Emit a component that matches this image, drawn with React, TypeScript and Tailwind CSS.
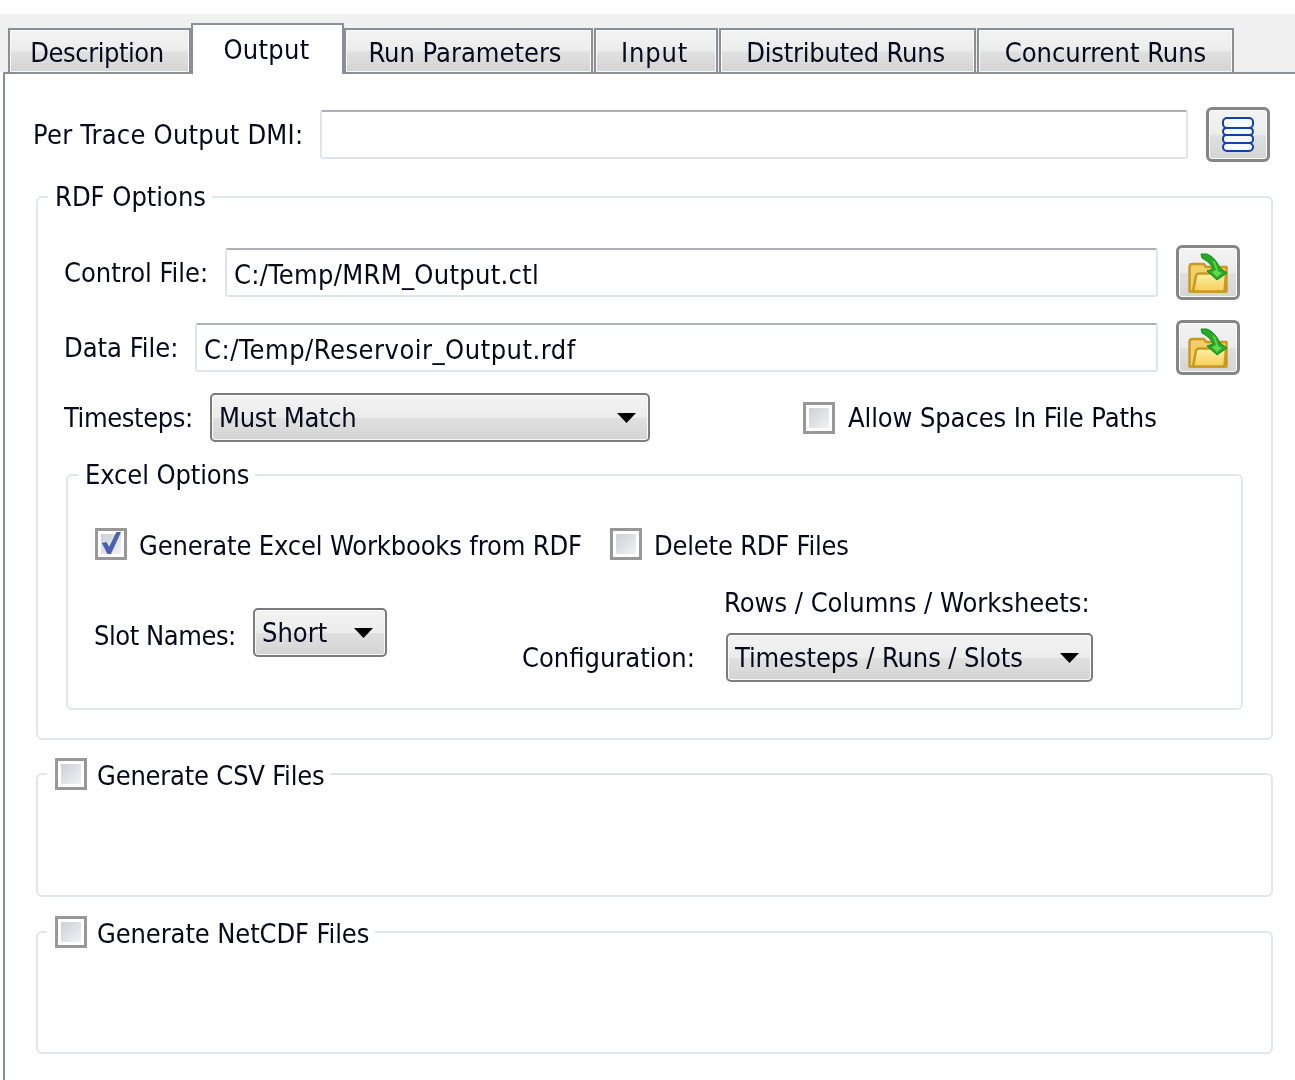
import React from 'react';

const btnBg = 'bg-[linear-gradient(to_bottom,#f3f3f3_0%,#ececec_50%,#e0e0e0_52%,#d4d4d4_100%)]';

const tabs = [
  { label: 'Description', w: 'w-[183px] pr-[5px] tracking-[-0.45px]' },
  { label: 'Output', w: 'w-[153px] pr-[2px] tracking-[0.3px]', active: true },
  { label: 'Run Parameters', w: 'w-[249px] mr-[1px] pr-[7px]' },
  { label: 'Input', w: 'w-[124px] mr-[1px] pr-[3px] tracking-[0.8px]' },
  { label: 'Distributed Runs', w: 'w-[257px] mr-[1px] pr-[4px] tracking-[-0.2px]' },
  { label: 'Concurrent Runs', w: 'w-[257px]' },
];

const FolderIcon = () => (
  <svg width="40" height="40" viewBox="0 0 40 40">
    <defs>
      <linearGradient id="folderFront" x1="0" y1="0" x2="0" y2="1">
        <stop offset="0" stopColor="#fff0a8" />
        <stop offset="1" stopColor="#f6cf58" />
      </linearGradient>
    </defs>
    <path d="M1.5 38.5V14q0-3 3-3h11l3 3h20v24.5z" fill="#f4cf68" stroke="#c89a24" strokeWidth="2.5" strokeLinejoin="round" />
    <path d="M5 38.5l3-16q1-2 3-2h27l-1.5 18z" fill="url(#folderFront)" stroke="#c89a24" strokeWidth="2.5" strokeLinejoin="round" />
    <path d="M13 1H19Q27 4 32 15L39 20L29 27L19 18L25 16Q23 10 14 5Z" fill="#2aa828" stroke="#12901a" strokeWidth="1" strokeLinejoin="round" />
    <path d="M27 9Q29 13 30 18L34 20L29 24L24 19L28 17Q27 12 24 7Z" fill="#62d84c" />
  </svg>
);

const DbIcon = () => (
  <svg width="32" height="35" viewBox="0 0 32 35" fill="#f4fbfc" stroke="#1440a8" strokeWidth="2">
    <rect x="1" y="1" width="30" height="10" rx="4" />
    <rect x="1" y="11" width="30" height="7" rx="3.5" />
    <rect x="1" y="18" width="30" height="8" rx="3.5" />
    <rect x="1" y="26" width="30" height="8" rx="4" />
  </svg>
);

const IconButton = ({ children }: { children: React.ReactNode }) => (
  <div className={`w-[64px] h-[55px] shrink-0 flex items-center justify-center border-[3px] border-[#868686] rounded-[6px] shadow-[inset_0_0_0_1px_#fafafa] ${btnBg}`}>
    {children}
  </div>
);

const TextInput = ({ value, className }: { value?: string; className: string }) => (
  <div className={`h-[49px] flex items-center pl-[7px] pt-[4px] border-2 border-[#e0e4ec] border-t-[#adb0b8] rounded-[3px] bg-white ${className}`}>
    {value}
  </div>
);

const Combo = ({ value, className, text }: { value: string; className: string; text?: string }) => (
  <div className={`h-[49px] flex items-center justify-between pl-[7px] pr-[12px] border-2 border-[#7c7c7c] rounded-[5px] shadow-[inset_0_0_0_1px_#fafafa] ${btnBg} ${className}`}>
    <span className={text}>{value}</span>
    <svg width="19" height="10" viewBox="0 0 19 10">
      <path d="M0 0h19L9.5 10z" fill="#000" />
    </svg>
  </div>
);

const Check = ({ checked }: { checked?: boolean }) => (
  <div className="w-[32px] h-[32px] shrink-0 border-[3px] border-[#989898] bg-white p-[3px]">
    <div className="w-full h-full flex items-center justify-center bg-[linear-gradient(135deg,#cdd0d6_0%,#f2f2f5_100%)]">
      {checked && (
        <svg width="22" height="24" viewBox="0 0 22 24" className="-mt-[3px]">
          <path d="M1 12l5-1 3 5L17 0h5L11 24H7z" fill="#4a62ae" />
        </svg>
      )}
    </div>
  </div>
);

const fieldset = 'border-2 border-[#dfe6ee] rounded-[6px] min-w-0';

export default function App() {
  return (
    <div className="w-[1295px] h-[1080px] overflow-hidden bg-white text-[27px] leading-[32px] text-[#08081c] whitespace-nowrap font-['DejaVu_Sans_Condensed','Noto_Sans',sans-serif] blur-[0.6px]">
      <div className="pt-[14px]">
        {/* Tab bar */}
        <div className="h-[58px] bg-[#f0f0f0] flex items-end pl-[8px]">
          {tabs.map((t) =>
            t.active ? (
              <div key={t.label} className={`${t.w} relative z-10 h-[51px] -mb-[2px] pt-[1px] flex items-center justify-center bg-white border-2 border-b-0 border-[#8a8e96]`}>
                {t.label}
              </div>
            ) : (
              <div key={t.label} className={`${t.w} h-[44px] pt-[4px] flex items-center justify-center border-2 border-b-0 border-[#8a8e96] shadow-[inset_0_0_0_1px_#fafafa] ${btnBg}`}>
                {t.label}
              </div>
            ),
          )}
        </div>

        {/* Pane */}
        <div className="ml-[3px] h-[1008px] border-l-2 border-t-2 border-[#8a8e96] pl-[31px] pt-[33px] w-[1292px]">
          <div className="flex items-center h-[55px]">
            <div className="w-[287px] ml-[-3px] tracking-[0.25px]">Per Trace Output DMI:</div>
            <TextInput className="w-[868px]" />
            <div className="ml-[18px]">
              <IconButton><DbIcon /></IconButton>
            </div>
          </div>

          <fieldset className={`${fieldset} w-[1237px] mt-[19px] pl-[28px] pr-[28px] pt-[32px] pb-[28px]`}>
            <legend className="-ml-[18px] pl-[7px] pr-[6px]">RDF Options</legend>

            <div className="flex items-center h-[55px] -ml-[2px] pr-[3px]">
              <div className="w-[161px]">Control File:</div>
              <TextInput value="C:/Temp/MRM_Output.ctl" className="w-[933px] tracking-[0.3px]" />
              <div className="ml-[18px]"><IconButton><FolderIcon /></IconButton></div>
            </div>

            <div className="flex items-center h-[55px] mt-[20px] -ml-[2px] pr-[3px]">
              <div className="w-[131px]">Data File:</div>
              <TextInput value="C:/Temp/Reservoir_Output.rdf" className="w-[963px] tracking-[0.5px]" />
              <div className="ml-[18px]"><IconButton><FolderIcon /></IconButton></div>
            </div>

            <div className="flex items-center h-[49px] mt-[18px] -ml-[2px]">
              <div className="w-[146px] tracking-[-0.4px]">Timesteps:</div>
              <Combo value="Must Match" className="w-[440px]" text="tracking-[-0.3px]" />
              <div className="ml-[153px]"><Check /></div>
              <div className="ml-[13px] tracking-[-0.1px]">Allow Spaces In File Paths</div>
            </div>

            <fieldset className={`${fieldset} mt-[17px] pl-[27px] pr-[20px] pt-[37px] pb-[26px]`}>
              <legend className="-ml-[17px] pl-[7px] pr-[6px] tracking-[-0.1px]">Excel Options</legend>

              <div className="flex items-center h-[32px]">
                <Check checked />
                <div className="ml-[12px] w-[471px] translate-y-[2px] tracking-[-0.15px]">Generate Excel Workbooks from RDF</div>
                <Check />
                <div className="ml-[12px] translate-y-[2px] tracking-[-0.2px]">Delete RDF Files</div>
              </div>

              <div className="flex mt-[27px]">
                <div className="flex items-center h-[49px] mt-[21px]">
                  <div className="w-[159px] -ml-[1px] translate-y-[3px] tracking-[-0.45px]">Slot Names:</div>
                  <Combo value="Short" className="w-[134px]" />
                </div>
                <div className="ml-[135px] w-[204px] self-end h-[49px] flex items-center">Configuration:</div>
                <div>
                  <div className="-ml-[2px]">Rows / Columns / Worksheets:</div>
                  <Combo value="Timesteps / Runs / Slots" className="w-[367px] mt-[14px]" text="tracking-[-0.1px]" />
                </div>
              </div>
            </fieldset>
          </fieldset>

          <fieldset className={`${fieldset} w-[1237px] h-[139px] mt-[18px]`}>
            <legend className="ml-[9px] pl-[8px] pr-[6px] flex items-center">
              <Check />
              <span className="ml-[10px] translate-y-[2px] tracking-[-0.2px]">Generate CSV Files</span>
            </legend>
          </fieldset>

          <fieldset className={`${fieldset} w-[1237px] h-[138px] mt-[19px]`}>
            <legend className="ml-[9px] pl-[8px] pr-[6px] flex items-center">
              <Check />
              <span className="ml-[10px] translate-y-[2px] tracking-[-0.1px]">Generate NetCDF Files</span>
            </legend>
          </fieldset>
        </div>
      </div>
    </div>
  );
}
